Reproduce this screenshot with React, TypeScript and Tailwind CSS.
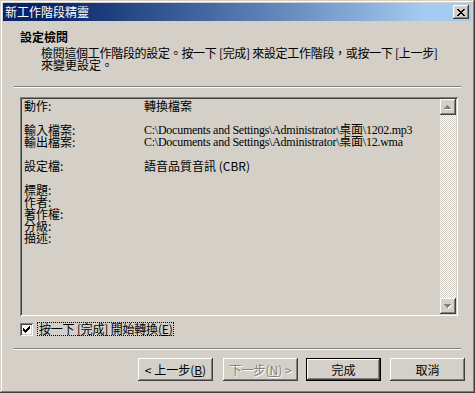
import React from 'react';

// classic 3D edges
const raised =
  'shadow-[inset_-1px_-1px_0_#404040,inset_1px_1px_0_#ffffff,inset_-2px_-2px_0_#808080,inset_2px_2px_0_#d4d0c8]';
const sunken =
  'shadow-[inset_1px_1px_0_#808080,inset_-1px_-1px_0_#ffffff,inset_2px_2px_0_#404040,inset_-2px_-2px_0_#d4d0c8]';

function Pixels({ rows, color, shadow }: { rows: string[]; color: string; shadow?: string }) {
  const w = rows[0].length + (shadow ? 1 : 0);
  const h = rows.length + (shadow ? 1 : 0);
  const rects: React.ReactNode[] = [];
  rows.forEach((r, y) =>
    r.split('').forEach((c, x) => {
      if (c === 'X') {
        if (shadow) rects.push(<rect key={`s${x}-${y}`} x={x + 1} y={y + 1} width={1} height={1} fill={shadow} />);
      }
    })
  );
  rows.forEach((r, y) =>
    r.split('').forEach((c, x) => {
      if (c === 'X') rects.push(<rect key={`p${x}-${y}`} x={x} y={y} width={1} height={1} fill={color} />);
    })
  );
  return (
    <svg width={w} height={h} viewBox={`0 0 ${w} ${h}`} shapeRendering="crispEdges">
      {rects}
    </svg>
  );
}

const closeGlyph = ['XX....XX', '.XX..XX.', '..XXXX..', '...XX...', '..XXXX..', '.XX..XX.', 'XX....XX'];
const checkGlyph = ['......X', '.....XX', 'X...XXX', 'XX.XXX.', 'XXXXX..', '.XXX...', '..X....'];
const upGlyph = ['...X...', '..XXX..', '.XXXXX.', 'XXXXXXX'];
const downGlyph = ['XXXXXXX', '.XXXXX.', '..XXX..', '...X...'];

function WizButton({ children, def, disabled }: { children: React.ReactNode; def?: boolean; disabled?: boolean }) {
  if (def) {
    return (
      <div className="w-[75px] h-[23px] border border-black">
        <div className={`w-full h-full flex items-center justify-center ${raised}`}>{children}</div>
      </div>
    );
  }
  return (
    <div
      className={`w-[75px] h-[23px] flex items-center justify-center ${raised} ${
        disabled ? 'text-[#808080] [text-shadow:1px_1px_0_#ffffff]' : ''
      }`}
    >
      {children}
    </div>
  );
}

const rows: [string, string, boolean?][] = [
  ['動作:', '轉換檔案'],
  ['', ''],
  ['輸入檔案:', 'C:\\Documents and Settings\\Administrator\\桌面\\1202.mp3', true],
  ['輸出檔案:', 'C:\\Documents and Settings\\Administrator\\桌面\\12.wma', true],
  ['', ''],
  ['設定檔:', '語音品質音訊 (CBR)'],
  ['', ''],
  ['標題:', ''],
  ['作者:', ''],
  ['著作權:', ''],
  ['分級:', ''],
  ['描述:', ''],
];

export default function App() {
  return (
    <div className="w-[475px] h-[393px] bg-[#d4d0c8] pl-[3px] pt-[3px] pr-[4px] pb-[3px] flex flex-col shadow-[inset_-1px_-1px_0_#404040,inset_1px_1px_0_#d4d0c8,inset_-2px_-2px_0_#808080,inset_2px_2px_0_#ffffff] font-['Noto_Sans_CJK_TC',sans-serif] text-[12px] text-black">
      {/* title bar */}
      <div className="h-[18px] flex items-center justify-between bg-linear-to-r from-[#0a246a] from-10% to-[#a6caf0] to-90% pl-[2px] pr-[2px]">
        <span className="text-white leading-[12px]">新工作階段精靈</span>
        <div className={`w-[16px] h-[14px] bg-[#d4d0c8] flex items-center justify-center ${raised}`}>
          <Pixels rows={closeGlyph} color="#000000" />
        </div>
      </div>

      <div className="flex flex-col flex-1">
        {/* header */}
        <div className="pl-[17px] pt-[9px]">
          <div className="font-bold leading-[14px]">設定檢閱</div>
          <div className="pl-[21px] mt-[3px] leading-[12px] whitespace-nowrap">
            <div className="tracking-[-0.3px]">檢閱這個工作階段的設定。按一下 [完成] 來設定工作階段，或按一下 [上一步]</div>
            <div>來變更設定。</div>
          </div>
        </div>

        <div className="mt-[15px] ml-[11px] mr-[10px] h-[2px] border-t border-t-[#808080] border-b border-b-white" />

        {/* summary box */}
        <div className={`mt-[9px] ml-[17px] w-[438px] h-[219px] p-[2px] flex ${sunken}`}>
          <div className="flex-1 pl-[2px] pt-[1px] leading-[12px]">
            {rows.map(([label, value, path], i) => (
              <div key={i} className="flex h-[12px] whitespace-nowrap">
                <div className="w-[120px]">{label}</div>
                <div className={path ? "font-['Liberation_Serif','Noto_Sans_CJK_TC',serif] tracking-[-0.25px]" : ''}>{value}</div>
              </div>
            ))}
          </div>
          <div className="w-[16px] flex flex-col bg-[repeating-conic-gradient(#d4d0c8_0%_25%,#ffffff_0%_50%)] bg-size-[2px_2px]">
            <div className={`w-[16px] h-[16px] bg-[#d4d0c8] flex items-center justify-center ${raised}`}>
              <Pixels rows={upGlyph} color="#808080" shadow="#ffffff" />
            </div>
            <div className="flex-1" />
            <div className={`w-[16px] h-[16px] bg-[#d4d0c8] flex items-center justify-center ${raised}`}>
              <Pixels rows={downGlyph} color="#808080" shadow="#ffffff" />
            </div>
          </div>
        </div>

        {/* checkbox */}
        <div className="mt-[6px] ml-[17px] flex items-center h-[14px]">
          <div className={`w-[13px] h-[13px] bg-white flex items-center justify-center ${sunken}`}>
            <Pixels rows={checkGlyph} color="#000000" />
          </div>
          <div className="ml-[4px] h-[14px] px-[1px] border border-dotted border-black leading-[12px] whitespace-nowrap tracking-[-0.2px]">
            按一下 [完成] 開始轉換(<span className="underline">E</span>)
          </div>
        </div>

        <div className="mt-[12px] ml-[11px] mr-[10px] h-[2px] border-t border-t-[#808080] border-b border-b-white" />

        {/* buttons */}
        <div className="mt-[8px] flex leading-[12px]">
          <div className="ml-[135px]">
            <WizButton>
              &lt; 上一步(<span className="underline">B</span>)
            </WizButton>
          </div>
          <div className="ml-[10px]">
            <WizButton disabled>
              下一步(<span className="underline">N</span>) &gt;
            </WizButton>
          </div>
          <div className="ml-[8px]">
            <WizButton def>完成</WizButton>
          </div>
          <div className="ml-[9px]">
            <WizButton>取消</WizButton>
          </div>
        </div>
      </div>
    </div>
  );
}
